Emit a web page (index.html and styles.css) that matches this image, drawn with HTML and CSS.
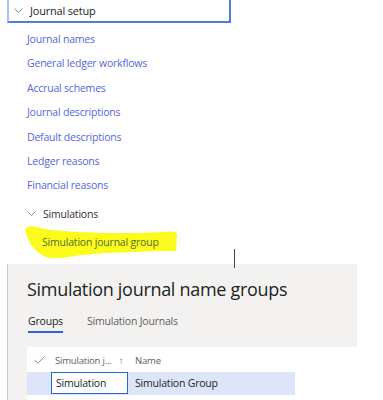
FILE: index.html
```html
<!DOCTYPE html>
<html>

<head>
  <meta charset="UTF-8">
  <title>Journal setup</title>
  <link rel="stylesheet" href="styles.css">
</head>

<body>
  <nav class="menu">
    <div class="menu-head">
      <svg class="chev" width="9" height="6" viewBox="0 0 9 6"><path d="M0.5 0.5 L4.5 4.5 L8.5 0.5" fill="none" stroke="#8a8886" stroke-width="1"/></svg>
      <span>Journal setup</span>
    </div>
    <ul class="links">
      <li>Journal names</li>
      <li>General ledger workflows</li>
      <li>Accrual schemes</li>
      <li>Journal descriptions</li>
      <li>Default descriptions</li>
      <li>Ledger reasons</li>
      <li>Financial reasons</li>
    </ul>
    <div class="sub-head">
      <svg class="chev" width="9" height="6" viewBox="0 0 9 6"><path d="M0.5 0.5 L4.5 4.5 L8.5 0.5" fill="none" stroke="#8a8886" stroke-width="1"/></svg>
      <span>Simulations</span>
    </div>
    <div class="sub-item">
      <svg class="marker" width="156" height="36" viewBox="0 0 156 36">
        <path d="M3 3 C6 0 12 1 22 4 C50 8 100 9 140 7 C148 6 153 6 154 9 L153 26 C130 26 90 27 60 30 C45 32 35 34 26 33 C18 31 10 24 6 16 C4 11 1 6 3 3 Z" fill="#fbfb1e"/>
      </svg>
      <span>Simulation journal group</span>
    </div>
  </nav>

  <div class="caret"></div>

  <section class="panel">
    <div class="panel-top">
      <h1>Simulation journal name groups</h1>
      <div class="tabs">
        <span class="tab active">Groups</span>
        <span class="tab">Simulation Journals</span>
      </div>
    </div>
    <div class="panel-body">
      <div class="grid">
        <div class="grid-row grid-header">
          <span class="cell check">
            <svg width="11" height="8" viewBox="0 0 11 8"><path d="M0.5 4 L4 7.2 L10.5 0.5" fill="none" stroke="#8a8886" stroke-width="1"/></svg>
          </span>
          <span class="cell col-id">Simulation j... <span class="sort">&#8593;</span></span>
          <span class="cell col-name">Name</span>
        </div>
        <div class="grid-row selected">
          <span class="cell check"></span>
          <span class="cell col-id"><span class="edit">Simulation</span></span>
          <span class="cell col-name">Simulation Group</span>
        </div>
      </div>
    </div>
  </section>
</body>

</html>
```

FILE: styles.css
```css
body {
  margin: 0;
  padding: 0;
  width: 383px;
  height: 400px;
  overflow: hidden;
  background-color: white;
  font-family: "Open Sans", "Noto Sans", sans-serif;
  letter-spacing: -0.2px;
  position: relative;
}

.menu {
  padding-left: 7px;
  width: 224px;
}

.menu-head {
  display: flex;
  align-items: center;
  height: 21px;
  border: 2px solid #4a7fe6;
  border-top: none;
  border-left-color: #a9c3f3;
  padding-left: 5px;
  font-size: 11px;
  color: #201f1e;
}

.chev {
  margin-right: 7px;
}

.links {
  list-style: none;
  margin: 4px 0 0 0;
  padding: 0 0 0 20px;
}

.links li {
  height: 24.4px;
  line-height: 24.4px;
  font-size: 10.5px;
  color: #5567db;
}

.sub-head {
  display: flex;
  align-items: center;
  height: 24px;
  margin-top: 4px;
  padding-left: 20px;
  font-size: 10.5px;
  color: #323130;
}

.sub-item {
  position: relative;
  height: 24px;
  line-height: 24px;
  margin-top: 4px;
  padding-left: 35px;
  font-size: 10.5px;
  color: #566d2c;
}

.sub-item span {
  position: relative;
}

.marker {
  position: absolute;
  left: 16px;
  top: -5px;
}

.caret {
  position: absolute;
  left: 234px;
  top: 249px;
  width: 1px;
  height: 19px;
  background-color: #444;
}

.panel {
  margin-top: 10px;
  margin-left: 7px;
  width: 349px;
  border-left: 1px solid #c8c6c4;
  background-color: #f3f2f1;
}

.panel-top {
  height: 83px;
  padding-left: 19px;
}

.panel-top h1 {
  margin: 0;
  padding-top: 13px;
  font-size: 18px;
  font-weight: 400;
  line-height: 24px;
  letter-spacing: -0.3px;
  color: #201f1e;
}

.tabs {
  display: flex;
  gap: 24px;
  margin-top: 13px;
  padding-left: 1px;
  font-size: 10.5px;
}

.tab {
  color: #605e5c;
  padding-bottom: 3px;
}

.tab.active {
  color: #201f1e;
  border-bottom: 2px solid #2266e3;
}

.panel-body {
  padding-left: 19px;
}

.grid {
  background-color: white;
  height: 60px;
}

.grid-row {
  display: flex;
  align-items: center;
  width: 268px;
  height: 23px;
}

.grid-header {
  font-size: 9.5px;
  color: #605e5c;
  padding-top: 2px;
}

.grid-row.selected {
  background-color: #dce6f8;
  font-size: 10.5px;
  color: #201f1e;
}

.cell.check {
  display: flex;
  justify-content: center;
  width: 24px;
}

.cell.col-id {
  width: 84px;
  padding-left: 4px;
  box-sizing: border-box;
}

.grid-row.selected .cell.col-id {
  padding-left: 0;
}

.sort {
  margin-left: 5px;
}

.edit {
  display: block;
  box-sizing: border-box;
  width: 77px;
  height: 22px;
  line-height: 20px;
  padding-left: 4px;
  border: 1px solid #2266e3;
  background-color: white;
}
```
